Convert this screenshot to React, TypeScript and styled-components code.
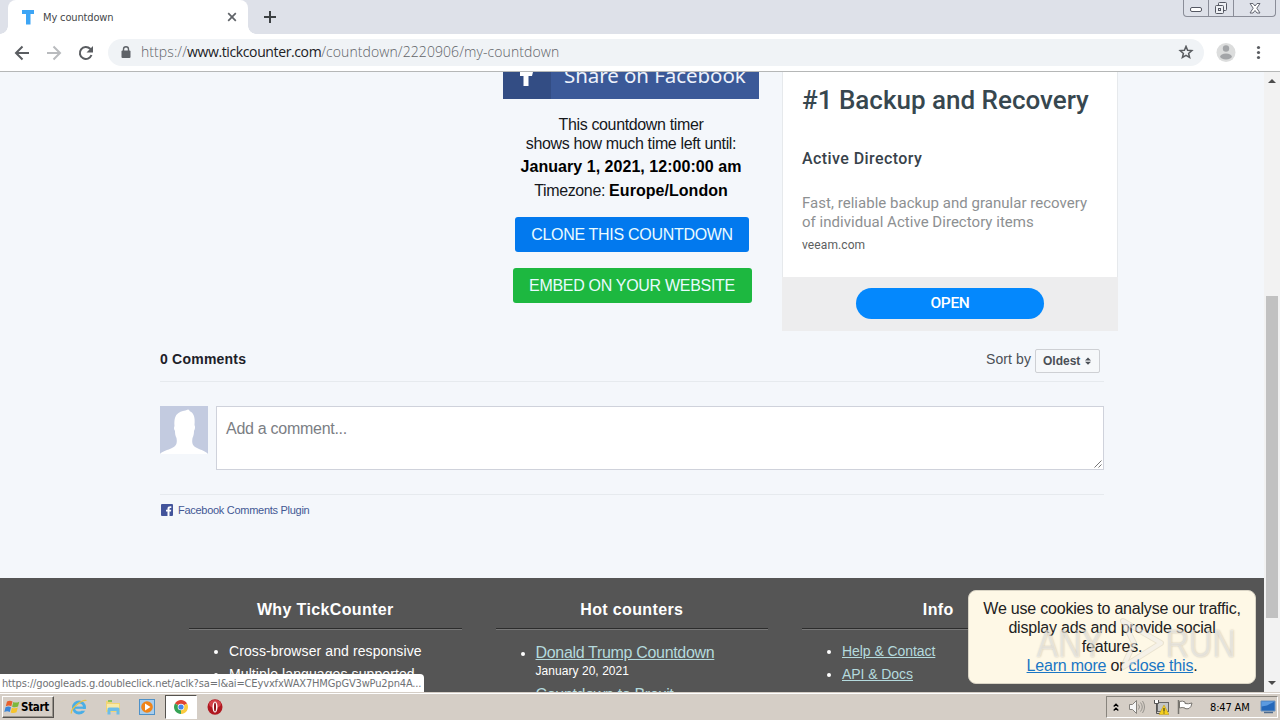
import React, { FC } from 'react';
import styled, { createGlobalStyle } from 'styled-components';

const ARIAL = "'Liberation Sans', Arial, sans-serif";
const TAHOMA = "'DejaVu Sans Condensed', 'DejaVu Sans', sans-serif";
const ROBOTO = 'Roboto, sans-serif';

const GlobalStyle = createGlobalStyle`
  * {
    box-sizing: border-box;
  }

  body {
    margin: 0;
    overflow: hidden;
    font-family: ${ARIAL};
  }

  svg {
    display: block;
    flex: none;
  }
`;

const Screen = styled.div`
  width: 1280px;
  height: 720px;
  display: flex;
  flex-direction: column;
  overflow: hidden;
  background: #f4f7fb;
`;

/* browser chrome */

const TabStrip = styled.div`
  height: 34px;
  flex: none;
  display: flex;
  align-items: flex-start;
  background: #dee1e9;
`;

const Tab = styled.div`
  position: relative;
  width: 240px;
  height: 34px;
  margin-left: 8px;
  padding: 0 10px 0 13px;
  display: flex;
  align-items: center;
  border-radius: 8px 8px 0 0;
  background: #fff;

  &::before,
  &::after {
    content: '';
    position: absolute;
    bottom: 0;
    width: 8px;
    height: 8px;
  }

  &::before {
    left: -8px;
    background: radial-gradient(circle at 0 0, #dee1e9 7.5px, #fff 8px);
  }

  &::after {
    right: -8px;
    background: radial-gradient(circle at 100% 0, #dee1e9 7.5px, #fff 8px);
  }
`;

const TabTitle = styled.span`
  flex: 1;
  margin-left: 8px;
  font: 11px ${TAHOMA};
  letter-spacing: -0.15px;
  color: #45474a;
`;

const NewTab = styled.div`
  margin: 10px 0 0 15px;
`;

const WindowButtons = styled.div`
  width: 93px;
  height: 17px;
  margin: 0 4px 0 auto;
  display: grid;
  grid-template-columns: 24px 25px 1fr;
  border: 1px solid #8a8d98;
  border-top: 0;
  border-radius: 0 0 4px 4px;

  > * + * {
    border-left: 1px solid #8a8d98;
  }
`;

const WindowButton = styled.div`
  display: flex;
  align-items: center;
  justify-content: center;
`;

const Toolbar = styled.div`
  height: 38px;
  flex: none;
  display: flex;
  align-items: center;
  padding: 0 14px;
  border-bottom: 1px solid #b5b7b7;
  background: #fff;
`;

const NavIcons = styled.div`
  display: flex;
  gap: 16px;
  margin-right: 14px;
`;

const AddressBar = styled.div`
  width: 1096px;
  height: 27px;
  padding: 0 10px 0 12px;
  display: flex;
  align-items: center;
  border-radius: 14px;
  background: #f0f3f6;
`;

const Url = styled.span`
  flex: 1;
  margin: -2px 0 0 9px;
  font: 300 14px 'Open Sans', 'Noto Sans', sans-serif;
  letter-spacing: 0.08px;
  white-space: nowrap;
  color: #606368;

  b {
    font-weight: 400;
    letter-spacing: -0.38px;
    color: #202124;
  }
`;

const ToolbarEnd = styled.div`
  display: flex;
  align-items: center;
  gap: 20px;
  margin-left: 12px;
`;

/* page */

const Viewport = styled.div`
  position: relative;
  height: 620px;
  flex: none;
  display: flex;
  overflow: hidden;
`;

const Page = styled.main`
  width: 1264px;
  height: 620px;
  overflow: hidden;
`;

const TopRow = styled.section`
  height: 259px;
  display: flex;
  gap: 23px;
  padding-left: 503px;
`;

const Share = styled.div`
  width: 256px;
  height: 48px;
  margin-top: -21px;
  align-self: flex-start;
  display: flex;
  overflow: hidden;
  background: #3b5998;
`;

const ShareMark = styled.div`
  width: 48px;
  padding: 11px 0 0 15px;
  background: #334d84;
`;

const ShareLabel = styled.span`
  padding: 10px 0 0 13px;
  font: 20.5px/28px 'Noto Sans', 'Open Sans', sans-serif;
  letter-spacing: -0.06px;
  white-space: nowrap;
  color: #eef2fb;
`;

const Timer = styled.div`
  width: 258px;
  display: flex;
  flex-direction: column;
  align-items: center;
`;

const TimerText = styled.p`
  width: 256px;
  margin: 0;
  align-self: flex-start;
  font-size: 16px;
  line-height: 19px;
  text-align: center;
  letter-spacing: -0.36px;
  color: #16181b;
`;

const Intro = styled(TimerText)`
  margin: 16px 0 2px;
`;

const Moment = styled(TimerText)`
  line-height: 24px;

  b {
    letter-spacing: 0.04px;
    color: #000;
  }
`;

const Actions = styled.div`
  margin-top: 14px;
  display: flex;
  flex-direction: column;
  align-items: center;
  gap: 16px;
`;

const Action = styled.a<{ $color: string; $width: number }>`
  width: ${({ $width }) => $width}px;
  height: 35px;
  border-radius: 3px;
  font-size: 16px;
  line-height: 35px;
  text-align: center;
  letter-spacing: -0.3px;
  white-space: nowrap;
  color: #e9fbff;
  background: ${({ $color }) => $color};
`;

const Ad = styled.aside`
  width: 336px;
  height: 259px;
  margin-left: -2px;
  display: flex;
  flex-direction: column;
  font-family: ${ROBOTO};
  border: 1px solid #e6e9ec;
  border-width: 0 1px;
  background: #fff;
`;

const AdBody = styled.div`
  height: 205px;
  padding: 12px 0 0 19px;
  white-space: nowrap;
`;

const AdTitle = styled.h2`
  margin: 0;
  font-size: 26px;
  font-weight: 500;
  line-height: 32px;
  color: #37474f;
`;

const AdSubtitle = styled.h3`
  margin: 33px 0 25px;
  font-size: 16px;
  font-weight: 500;
  line-height: 20px;
  letter-spacing: 0.42px;
  color: #37424a;
`;

const AdText = styled.p`
  margin: 0;
  font-size: 15px;
  line-height: 19px;
  letter-spacing: 0.03px;
  color: #8d9092;
`;

const AdHost = styled.p`
  margin: 5px 0 0;
  font-size: 12px;
  line-height: 16px;
  letter-spacing: 0.1px;
  color: #5c5e60;
`;

const AdFooter = styled.div`
  flex: 1;
  margin: 0 -1px;
  padding: 11px 0 0 74px;
  background: #ededee;
`;

const AdButton = styled.div`
  width: 188px;
  height: 31px;
  border-radius: 16px;
  font-size: 15.5px;
  font-weight: 500;
  line-height: 30px;
  text-align: center;
  letter-spacing: -0.3px;
  color: #fff;
  background: #0488fd;
`;

const Comments = styled.section`
  width: 944px;
  margin-left: 160px;
`;

const CommentsHeader = styled.div`
  height: 51px;
  padding: 6px 4px 0 0;
  display: flex;
  align-items: center;
  border-bottom: 1px solid #e6eaee;
`;

const CommentsCount = styled.strong`
  flex: 1;
  font-size: 14px;
  letter-spacing: 0.22px;
  color: #1d2129;
`;

const SortLabel = styled.span`
  margin-right: 4px;
  font-size: 14px;
  letter-spacing: 0.1px;
  color: #4b4f56;
`;

const SortSelect = styled.div`
  width: 65px;
  height: 24px;
  margin-top: 4px;
  padding: 0 8px 0 7px;
  display: flex;
  align-items: center;
  justify-content: space-between;
  border: 1px solid #ced0d4;
  border-radius: 2px;
  font-size: 12px;
  font-weight: bold;
  color: #4b4f56;
  background: #f6f8fa;
`;

const CommentForm = styled.div`
  height: 113px;
  padding-top: 24px;
  display: flex;
  align-items: flex-start;
  gap: 8px;
  border-bottom: 1px solid #e6eaee;
`;

const CommentInput = styled.div`
  flex: 1;
  height: 64px;
  padding: 12px 0 0 9px;
  display: flex;
  justify-content: space-between;
  border: 1px solid #cfd2db;
  font-size: 16px;
  line-height: 20px;
  letter-spacing: -0.28px;
  color: #7b7e84;
  background: #fff;

  svg {
    align-self: flex-end;
  }
`;

const Plugin = styled.div`
  height: 83px;
  padding: 9px 0 0 1px;
  display: flex;
  align-items: flex-start;
  gap: 5px;
  font: 11px/13px ${ARIAL};
  letter-spacing: -0.28px;
  color: #435794;
`;

const Footer = styled.footer`
  height: 150px;
  padding-left: 172px;
  display: grid;
  grid-template-columns: repeat(3, 306.5px);
  background: #555;
  color: #fff;
`;

const FooterColumn = styled.div`
  padding: 22px 17px 0;
`;

const FooterTitle = styled.h4`
  margin: 0;
  height: 29px;
  font-size: 16px;
  line-height: 19px;
  text-align: center;
  letter-spacing: 0.36px;
  border-bottom: 1px solid #2c2c2c;
  box-shadow: 0 1px #777;
`;

const FooterList = styled.ul<{ $top: number }>`
  margin: ${({ $top }) => $top}px 0 0;
  padding-left: 40px;
  font-size: 14px;
  white-space: nowrap;
`;

const FooterItem = styled.li`
  height: 23px;
  line-height: 23px;
  letter-spacing: 0.1px;
`;

const HotItem = styled.li`
  height: 42px;
  line-height: 22px;

  a {
    font-size: 16px;
    letter-spacing: -0.32px;
  }

  small {
    display: block;
    font-size: 12px;
    line-height: 15px;
    letter-spacing: 0.05px;
  }
`;

const FooterLink = styled.a`
  letter-spacing: -0.06px;
  color: #b4dadd;
  text-decoration: underline;
`;

const Scrollbar = styled.div`
  width: 16px;
  display: flex;
  flex-direction: column;
  align-items: center;
  background: #f2f2f2;
`;

const ScrollArrow = styled.div<{ $down?: boolean }>`
  margin-top: ${({ $down }) => ($down ? '63px' : '7px')};
  border: 4px solid transparent;
  border-width: ${({ $down }) => ($down ? '4px 4px 0' : '0 4px 4px')};
  border-${({ $down }) => ($down ? 'top' : 'bottom')}-color: #4c4c4c;
`;

const ScrollThumb = styled.div`
  width: 12px;
  height: 322px;
  margin-top: 213px;
  background: #c1c1c1;
`;

const StatusBubble = styled.div`
  position: absolute;
  left: 0;
  bottom: 0;
  width: 424px;
  height: 18px;
  padding-left: 2px;
  border-radius: 0 4px 0 0;
  font: 11px/19px ${TAHOMA};
  letter-spacing: -0.15px;
  white-space: nowrap;
  color: #6f7275;
  background: #fff;
`;

const Cookies = styled.div`
  position: absolute;
  left: 968px;
  top: 518px;
  width: 288px;
  height: 94px;
  padding-top: 8px;
  border: 1px solid #d9d4c5;
  border-radius: 8px;
  font-size: 16px;
  line-height: 19px;
  text-align: center;
  letter-spacing: -0.21px;
  white-space: nowrap;
  color: #222;
  background: #fef8e6;

  a {
    color: #1a76c4;
    text-decoration: underline;
  }
`;

const Watermark = styled.div`
  position: absolute;
  left: 1037px;
  top: 544px;
  display: grid;
  grid-template-columns: 81px 48px 69px;
  align-items: center;
  font: 38px/52px ${ARIAL};
  color: rgba(255, 255, 255, 0.5);
  text-shadow: 0 0 2px rgba(110, 100, 80, 0.4);

  span {
    transform: scaleX(0.85);
    transform-origin: 0 50%;
  }
`;

/* taskbar */

const Taskbar = styled.div`
  flex: 1;
  display: flex;
  align-items: flex-start;
  padding: 2px 2px 0;
  border-top: 1px solid #d5cec6;
  box-shadow: inset 0 1px #fff;
  background: #d5cec6;
`;

const StartButton = styled.div`
  width: 52px;
  height: 22px;
  margin: 1px 9px 0 0;
  padding-left: 1px;
  display: flex;
  align-items: center;
  gap: 1px;
  border: 1px solid #fff;
  border-color: #fff #55524e #55524e #fff;
  box-shadow: inset -1px -1px #99948c;
  font: bold 11.5px ${TAHOMA};
  letter-spacing: -0.3px;
  color: #000;
`;

const TaskIcon = styled.div<{ $active?: boolean }>`
  width: 32px;
  height: 24px;
  margin-right: 2px;
  display: flex;
  align-items: center;
  justify-content: center;
  ${({ $active }) =>
    $active &&
    `
    border: 1px solid #55524e;
    border-color: #55524e #fff #fff #55524e;
    background: #fff;
  `}
`;

const Tray = styled.div`
  width: 172px;
  height: 22px;
  margin: 1px 0 0 auto;
  padding: 0 1px 0 6px;
  display: flex;
  align-items: center;
  border: 1px solid #88847d;
  border-color: #88847d #fff #fff #88847d;
`;

const TrayIcons = styled.div`
  display: flex;
  align-items: center;
  gap: 8px;
  margin-right: 17px;

  svg:first-child {
    margin-right: 2px;
  }
`;

const Clock = styled.span`
  flex: 1;
  font: 11px ${TAHOMA};
  letter-spacing: -0.15px;
  white-space: nowrap;
  color: #000;
`;

const WindowControls: FC = () => (
  <WindowButtons>
    <WindowButton>
      <svg width="12" height="17" viewBox="0 0 12 17">
        <rect x="0.5" y="7.5" width="11" height="4" rx="1.5" fill="#fff" stroke="#555863" />
      </svg>
    </WindowButton>
    <WindowButton>
      <svg width="14" height="16" viewBox="0 0 14 16" fill="#eef0f4" stroke="#555863">
        <rect x="4.5" y="1.5" width="8" height="8" rx="1" />
        <rect x="1.5" y="4.5" width="8" height="8" rx="1" />
        <rect x="4.5" y="7.5" width="2" height="2" />
      </svg>
    </WindowButton>
    <WindowButton>
      <svg width="12" height="16" viewBox="0 0 12 16">
        <path
          d="M1 2.500h3l2 2.500 2-2.500h3l-3.200 4.700 3.200 4.800H8L6 9.500l-2 2.500H1L4.200 7.200z"
          fill="#fff"
          stroke="#646772"
        />
      </svg>
    </WindowButton>
  </WindowButtons>
);

const BrowserChrome: FC = () => (
  <>
    <TabStrip>
      <Tab>
        <svg width="14" height="16" viewBox="0 0 14 16">
          <path d="M1 1h12v4H9.500v10.500H5V5H1z" fill="#3da5f5" />
        </svg>
        <TabTitle>My countdown</TabTitle>
        <svg width="12" height="12" viewBox="0 0 12 12">
          <path d="M2.200 2.200l7.600 7.600M9.800 2.200L2.200 9.800" stroke="#5f6368" strokeWidth="1.700" />
        </svg>
      </Tab>
      <NewTab>
        <svg width="14" height="14" viewBox="0 0 14 14">
          <path d="M7 1v12M1 7h12" stroke="#3c4043" strokeWidth="2" />
        </svg>
      </NewTab>
      <WindowControls />
    </TabStrip>
    <Toolbar>
      <NavIcons>
        <svg width="16" height="16" viewBox="0 0 16 16" fill="none" stroke="#5a5d61" strokeWidth="2">
          <path d="M15 8H2.500M8.500 1.500L2 8l6.500 6.500" />
        </svg>
        <svg width="16" height="16" viewBox="0 0 16 16" fill="none" stroke="#b9bbbe" strokeWidth="2">
          <path d="M1 8h12.500M7.500 1.500L14 8l-6.500 6.500" />
        </svg>
        <svg width="16" height="16" viewBox="0 0 16 16">
          <path d="M13.500 10A6 6 0 1 1 12.200 3.800L14 5.500" fill="none" stroke="#5a5d61" strokeWidth="2" />
          <path d="M15 1v6.500H8.500z" fill="#5a5d61" />
        </svg>
      </NavIcons>
      <AddressBar>
        <svg width="12" height="14" viewBox="0 0 12 14">
          <rect x="1.500" y="4.500" width="9" height="7.500" rx="1" fill="#5f6368" />
          <path d="M3.500 5V3.300a2.500 2.500 0 0 1 5 0V5" fill="none" stroke="#5f6368" strokeWidth="1.400" />
        </svg>
        <Url>
          https://<b>www.tickcounter.com</b>/countdown/2220906/my-countdown
        </Url>
        <svg width="16" height="16" viewBox="0 0 16 16">
          <path
            d="M8 1.400l1.600 3.900 4.200.3-3.200 2.800 1 4.100L8 10.300l-3.600 2.200 1-4.100-3.200-2.800 4.200-.3z"
            fill="none"
            stroke="#5a5d61"
            strokeWidth="1.500"
          />
        </svg>
      </AddressBar>
      <ToolbarEnd>
        <svg width="20" height="20" viewBox="0 0 20 20">
          <circle cx="10" cy="9.500" r="9.500" fill="#dcdddd" />
          <circle cx="10" cy="5.500" r="3.200" fill="#a3a5a8" />
          <ellipse cx="10" cy="13.500" rx="5.800" ry="3" fill="#a3a5a8" />
        </svg>
        <svg width="6" height="16" viewBox="0 0 6 16" fill="#5a5d61">
          <circle cx="2.500" cy="2.500" r="1.600" />
          <circle cx="2.500" cy="7.500" r="1.600" />
          <circle cx="2.500" cy="12.500" r="1.600" />
        </svg>
      </ToolbarEnd>
    </Toolbar>
  </>
);

const BackupAd: FC = () => (
  <Ad>
    <AdBody>
      <AdTitle>#1 Backup and Recovery</AdTitle>
      <AdSubtitle>Active Directory</AdSubtitle>
      <AdText>
        Fast, reliable backup and granular recovery
        <br />
        of individual Active Directory items
      </AdText>
      <AdHost>veeam.com</AdHost>
    </AdBody>
    <AdFooter>
      <AdButton>OPEN</AdButton>
    </AdFooter>
  </Ad>
);

const CommentsPlugin: FC = () => (
  <Comments>
    <CommentsHeader>
      <CommentsCount>0 Comments</CommentsCount>
      <SortLabel>Sort by</SortLabel>
      <SortSelect>
        Oldest
        <svg width="6" height="8" viewBox="0 0 6 8" fill="#4b4f56">
          <path d="M0 3.500L3 .5l3 3zM0 4.700h6l-3 3z" />
        </svg>
      </SortSelect>
    </CommentsHeader>
    <CommentForm>
      <svg width="48" height="48" viewBox="0 0 48 48">
        <path d="M0 0h48v48H0z" fill="#c3cbe0" />
        <path
          d="M0 48c2-2.500 8-4 12-6 4-2 5.500-4 4.500-10-1.300-2.500-1.500-4.500-1.500-7-1.500-2-1-4-.5-5C14 14 15 9 18.500 7c2.500-2 6-2 9.500-3.500 1 0 1.500.8 1.500 1.500 3.500 1.500 6 5 5 14 1 2 .5 4-.5 6 0 2.500-.3 4.500-1.500 7-1 6 .5 8 4.500 10 4 2 9 3.500 11 6z"
          fill="#fff"
        />
      </svg>
      <CommentInput>
        Add a comment...
        <svg width="10" height="10" viewBox="0 0 10 10">
          <path d="M1.500 8.500l7-7M5.500 8.500l3-3" stroke="#777" />
        </svg>
      </CommentInput>
    </CommentForm>
    <Plugin>
      <svg width="12" height="12" viewBox="0 0 12 12">
        <rect width="12" height="12" rx="1" fill="#42549b" />
        <path d="M6.500 12V7.500H5V5.700h1.500V4.500C6.500 2.800 7.800 2 10.300 2.200v1.700C8.800 3.800 8.500 4 8.500 5v.7h1.700L10 7.500H8.500V12z" fill="#fff" />
      </svg>
      Facebook Comments Plugin
    </Plugin>
  </Comments>
);

const PageFooter: FC = () => (
  <Footer>
    <FooterColumn>
      <FooterTitle>Why TickCounter</FooterTitle>
      <FooterList $top={11}>
        <FooterItem>Cross-browser and responsive</FooterItem>
        <FooterItem>Multiple languages supported</FooterItem>
      </FooterList>
    </FooterColumn>
    <FooterColumn>
      <FooterTitle>Hot counters</FooterTitle>
      <FooterList $top={13}>
        <HotItem>
          <FooterLink>Donald Trump Countdown</FooterLink>
          <small>January 20, 2021</small>
        </HotItem>
        <HotItem>
          <FooterLink>Countdown to Brexit</FooterLink>
        </HotItem>
      </FooterList>
    </FooterColumn>
    <FooterColumn>
      <FooterTitle>Info</FooterTitle>
      <FooterList $top={11}>
        <FooterItem>
          <FooterLink>Help &amp; Contact</FooterLink>
        </FooterItem>
        <FooterItem>
          <FooterLink>API &amp; Docs</FooterLink>
        </FooterItem>
      </FooterList>
    </FooterColumn>
  </Footer>
);

const TaskbarRow: FC = () => (
  <Taskbar>
    <StartButton>
      <svg width="16" height="16" viewBox="0 0 16 16">
        <path d="M3 2.500q3-1.500 5.500 0L7.300 7.300Q5 6 1.800 7.200z" fill="#e8602c" />
        <path d="M9.300 3q2.700 1.300 6-.3L14 7.500q-3 1.500-5.900.2z" fill="#7db83a" />
        <path d="M1.500 8.200q3-1.300 5.500 0l-1.200 4.700q-2.500-1.400-5.500 0z" fill="#3b86d8" />
        <path d="M7.900 8.700q3 1.200 5.900-.2l-1.300 4.800q-2.900 1.400-5.800.2z" fill="#f6c42c" />
      </svg>
      Start
    </StartButton>
    <TaskIcon>
      <svg width="18" height="18" viewBox="0 0 18 18">
        <circle cx="9" cy="9.500" r="5.500" fill="none" stroke="#4aaee6" strokeWidth="3" />
        <path d="M4.500 9.700h11" stroke="#4aaee6" strokeWidth="2.200" />
        <path d="M11 11h6v1.800h-5z" fill="#d5cec6" />
        <path d="M1.500 15.500C0 11 12 1 16.500 2.500" fill="none" stroke="#e7c246" strokeWidth="1.300" />
      </svg>
    </TaskIcon>
    <TaskIcon>
      <svg width="16" height="16" viewBox="0 0 16 16">
        <path d="M1 2h5l1 2h8v9H1z" fill="#f1d574" />
        <path d="M3 1h4v2H3z" fill="#8cc15f" />
        <path d="M2 5h12v6H2z" fill="#f8eaa8" />
        <path d="M2.500 15.500V10q0-1.500 1.500-1.500h9q1.500 0 1.500 1.500v5.500h-3V12h-6v3.500z" fill="#6cbde8" />
      </svg>
    </TaskIcon>
    <TaskIcon>
      <svg width="16" height="16" viewBox="0 0 16 16">
        <rect x="0.500" y="0.500" width="15" height="15" fill="#a8cdec" stroke="#4e91c8" />
        <circle cx="8" cy="8" r="5.800" fill="#f08418" />
        <path d="M6 4.500L11.500 8 6 11.500z" fill="#fff" />
      </svg>
    </TaskIcon>
    <TaskIcon $active>
      <svg width="14" height="14" viewBox="0 0 14 14">
        <path d="M7 7L.94 3.500A7 7 0 0 1 13.060 3.500z" fill="#df4433" />
        <path d="M7 7l6.060-3.500A7 7 0 0 1 7 14z" fill="#fbcb3f" />
        <path d="M7 7v7A7 7 0 0 1 .94 3.500z" fill="#36a355" />
        <circle cx="7" cy="7" r="3.300" fill="#fff" />
        <circle cx="7" cy="7" r="2.600" fill="#4486ec" />
      </svg>
    </TaskIcon>
    <TaskIcon>
      <svg width="16" height="16" viewBox="0 0 16 16">
        <ellipse cx="8" cy="8" rx="7.500" ry="7.800" fill="#b01820" />
        <ellipse cx="8" cy="5" rx="6" ry="4" fill="#d4434a" />
        <ellipse cx="8" cy="8" rx="2.500" ry="5.500" fill="#fff" />
        <ellipse cx="8" cy="8" rx="1" ry="4.500" fill="#8b0e14" />
      </svg>
    </TaskIcon>
    <Tray>
      <TrayIcons>
        <svg width="6" height="9" viewBox="0 0 6 9" fill="none" stroke="#000" strokeWidth="1.300">
          <path d="M.7 3.500L3 1.200l2.300 2.300M.7 7.500L3 5.200l2.300 2.300" />
        </svg>
        <svg width="16" height="16" viewBox="0 0 16 16" fill="none" stroke="#85827d">
          <path d="M.5 5.500h3l4-4v13l-4-4h-3z" fill="#f6f6f6" />
          <path d="M9.500 5.500q2 2.500 0 5M11.500 3.500q3.500 4.500 0 9M13.500 2q4 6 0 12" stroke="#96938d" />
        </svg>
        <svg width="16" height="16" viewBox="0 0 16 16">
          <rect x="4.500" y="3.500" width="11" height="9" fill="#c3c5c5" stroke="#666" />
          <path d="M1.500 1v3.500h4V1M3.500 4.500v10H7" fill="none" stroke="#555" />
          <path d="M2 1h3v3H2z" fill="#fff" />
          <path d="M11 6l5 9.500H6z" fill="#f5cf1c" stroke="#b99513" strokeWidth="0.500" />
          <path d="M11 9v3.500M11 13.500v1" stroke="#222" />
        </svg>
        <svg width="16" height="16" viewBox="0 0 16 16">
          <path d="M2.500 2.500q3-1 5.500.5v1.500q3 .8 7-.5-.5 4-3 5.500-2 .7-4 0V9q-3-1-5.500 0z" fill="#fff" stroke="#77746f" />
          <path d="M1.500 1v14" stroke="#77746f" strokeWidth="1.500" />
        </svg>
      </TrayIcons>
      <Clock>8:47 AM</Clock>
      <svg width="16" height="14" viewBox="0 0 16 14">
        <path d="M1 1h14v10H1z" fill="#2468ba" stroke="#6f94bd" />
        <path d="M1.500 1.500h13L7 5.500l-5.500 1z" fill="#5c9be0" />
        <path d="M4 12.500h9" stroke="#506c8e" strokeWidth="1.500" />
      </svg>
    </Tray>
  </Taskbar>
);

const App: FC = () => (
  <Screen>
    <GlobalStyle />
    <BrowserChrome />
    <Viewport>
      <Page>
        <TopRow>
          <Timer>
            <Share>
              <ShareMark>
                <svg width="18" height="30" viewBox="0 0 18 30">
                  <path d="M5.500 24V14H2v-4h3.500V7q0-5 6-5H15v4h-2.500q-2 0-2 2v2H15l-1 4h-3.500v10z" fill="#fff" />
                </svg>
              </ShareMark>
              <ShareLabel>Share on Facebook</ShareLabel>
            </Share>
            <Intro>
              This countdown timer
              <br />
              shows how much time left until:
            </Intro>
            <Moment>
              <b>January 1, 2021, 12:00:00 am</b>
            </Moment>
            <Moment>
              Timezone: <b>Europe/London</b>
            </Moment>
            <Actions>
              <Action $color="#0279ee" $width={234}>
                CLONE THIS COUNTDOWN
              </Action>
              <Action $color="#1db840" $width={239}>
                EMBED ON YOUR WEBSITE
              </Action>
            </Actions>
          </Timer>
          <BackupAd />
        </TopRow>
        <CommentsPlugin />
        <PageFooter />
      </Page>
      <Scrollbar>
        <ScrollArrow />
        <ScrollThumb />
        <ScrollArrow $down />
      </Scrollbar>
      <StatusBubble>https://googleads.g.doubleclick.net/aclk?sa=l&amp;ai=CEyvxfxWAX7HMGpGV3wPu2pn4A...</StatusBubble>
      <Cookies>
        We use cookies to analyse our traffic,
        <br />
        display ads and provide social
        <br />
        features.
        <br />
        <a>Learn more</a> or <a>close this</a>.
      </Cookies>
      <Watermark>
        <span>ANY</span>
        <svg width="48" height="56" viewBox="0 0 48 56" fill="none" strokeLinejoin="round">
          <path d="M5 5l38 22L5 51l11-24z" stroke="rgba(110,100,80,.14)" strokeWidth="6" />
          <path d="M5 5l38 22L5 51l11-24z" stroke="rgba(255,255,255,.5)" strokeWidth="4" />
        </svg>
        <span>RUN</span>
      </Watermark>
    </Viewport>
    <TaskbarRow />
  </Screen>
);

export default App;
